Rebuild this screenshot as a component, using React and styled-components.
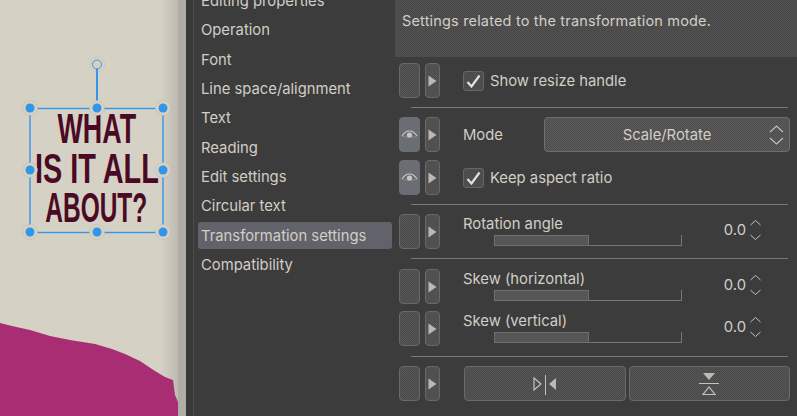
import React from 'react';
import styled, { createGlobalStyle } from 'styled-components';

const GlobalStyle = createGlobalStyle`
  html, body {
    margin: 0;
    padding: 0;
    height: 100%;
    overflow: hidden;
    background: #3c3c3c;
  }
  #root {
    height: 100%;
  }
`;

// the screenshot is a dithered gif, so filled parts have a 1px checker on them
const dither = 'repeating-conic-gradient(rgba(0,0,0,0.13) 0 25%, transparent 0 50%)';

const Page = styled.div`
  display: flex;
  width: 797px;
  height: 416px;
  overflow: hidden;
  font-family: Inter, "Liberation Sans", sans-serif;
  font-size: 14.8px;
  color: #d2cec6;
`;

const Canvas = styled.div`
  position: relative;
  flex: 0 0 178px;
  background: linear-gradient(to right, #d6d1c5 0, #d6d1c5 160px, #bebbb3 178px);
  overflow: hidden;
`;

const Edge = styled.div`
  flex: 0 0 8px;
  background: #b0ada7;
`;

const Gutter = styled.div`
  flex: 0 0 8px;
  background: #393939;
  border-right: 1px solid #4a4a4a;
  box-sizing: border-box;
`;

const Blob = styled.svg`
  position: absolute;
  left: 0;
  top: 0;
`;

const Caption = styled.div`
  position: absolute;
  left: 30px;
  top: 108px;
  width: 133px;
  height: 124px;
  display: flex;
  flex-direction: column;
  align-items: center;
  font-family: "Liberation Sans", sans-serif;
  font-weight: 700;
  font-size: 39.5px;
  line-height: 39.5px;
  color: #4a0a24;
  text-align: center;
  padding-top: 1px;
  box-sizing: border-box;
  white-space: nowrap;
`;

const CaptionLine = styled.span`
  display: block;
  transform: scale(${(p) => p.$squeeze}, 1.08);
`;

const Panel = styled.div`
  flex: 1;
  display: flex;
  min-width: 0;
  background: #3c3c3c;
`;

const Sidebar = styled.div`
  flex: 0 0 201px;
  box-sizing: border-box;
  padding: 0 3px 0 4px;
  margin-top: -13px;
  display: flex;
  flex-direction: column;
  gap: 2.33px;
`;

const SideItem = styled.div`
  height: 27px;
  line-height: 29px;
  padding-left: 3px;
  border-radius: 3px;
  white-space: nowrap;
  background: ${(p) => (p.$active ? '#62636a' : 'transparent')};
`;

const Content = styled.div`
  flex: 1;
  min-width: 0;
  display: flex;
  flex-direction: column;
`;

const Description = styled.div`
  height: 57px;
  box-sizing: border-box;
  padding: 12px 0 0 7px;
  background-color: #525252;
  background-image: ${dither};
  background-size: 2px 2px;
  line-height: 18px;
  letter-spacing: 0.012em;
  font-size: 14.5px;
`;

const Row = styled.div`
  display: flex;
  align-items: stretch;
  height: 35px;
  margin-top: ${(p) => p.$top}px;
  padding: 0 7px 0 4px;
`;

const Toggle = styled.div`
  flex: 0 0 21px;
  box-sizing: border-box;
  display: flex;
  align-items: center;
  justify-content: center;
  border-radius: 4px;
  border: 1px solid ${(p) => (p.$on ? '#6b6d75' : '#686868')};
  background-color: ${(p) => (p.$on ? '#6b6d75' : '#565656')};
  background-image: ${(p) => (p.$on ? 'none' : dither)};
  background-size: 2px 2px;
`;

const Arrow = styled(Toggle)`
  flex: 0 0 15px;
  margin-left: 5px;
`;

const Body = styled.div`
  flex: 1;
  margin-left: 23px;
  display: flex;
  align-items: center;
  min-width: 0;
`;

const Separator = styled.div`
  height: 1px;
  margin: ${(p) => p.$top}px 9px 0 16px;
  background: #77777a;
`;

const CheckBox = styled.div`
  flex: 0 0 21px;
  height: 20px;
  box-sizing: border-box;
  display: flex;
  align-items: center;
  justify-content: center;
  margin-right: 6px;
  border: 1px solid #666;
  border-radius: 3px;
  background: #4d4d4d;
`;

const Mode = styled.span`
  flex: 0 0 81px;
`;

const Select = styled.div`
  position: relative;
  flex: 1;
  align-self: stretch;
  box-sizing: border-box;
  display: flex;
  align-items: center;
  justify-content: center;
  border: 1px solid #6e6e6e;
  border-radius: 4px;
  background-color: #5a5a5a;
  background-image: ${dither};
  background-size: 2px 2px;
`;

const SelectArrows = styled.svg`
  position: absolute;
  right: 5px;
  top: 7px;
`;

const SliderBody = styled.div`
  flex: 1;
  align-self: stretch;
  display: flex;
  min-width: 0;
`;

const SliderColumn = styled.div`
  flex: 0 0 219px;
  display: flex;
  flex-direction: column;
`;

const SliderLabel = styled.div`
  height: 21px;
  line-height: 20px;
  white-space: nowrap;
`;

const Track = styled.div`
  margin-left: 31px;
  width: 188px;
  height: 11px;
  box-sizing: border-box;
  border-bottom: 1px solid #77777a;
  border-right: 1px solid #77777a;
`;

const TrackFill = styled.div`
  width: 95px;
  height: 11px;
  box-sizing: border-box;
  border: 1px solid #6e6e6e;
  background-color: #5c5c5c;
  background-image: ${dither};
  background-size: 2px 2px;
`;

const Value = styled.div`
  flex: 1;
  display: flex;
  align-items: center;
  justify-content: flex-end;
  padding-right: 28px;
  gap: 3px;
  margin-top: -4px;
`;

const ActionButton = styled.div`
  flex: 1;
  box-sizing: border-box;
  display: flex;
  align-items: center;
  justify-content: center;
  border: 1px solid #6a6a6a;
  border-radius: 4px;
  background-color: #555;
  background-image: ${dither};
  background-size: 2px 2px;
`;

const Actions = styled.div`
  flex: 1;
  display: flex;
  gap: 3px;
  margin-left: 24px;
`;

const Play = () => (
  <svg width="9" height="12" viewBox="0 0 9 12">
    <path d="M0.5 0.5L8.5 6L0.5 11.5Z" fill="#bdb9b0" />
  </svg>
);

const Eye = () => (
  <svg width="17" height="11" viewBox="0 0 17 11" fill="none">
    <path d="M1 7C3.5 3 6 2 8.5 2S13.5 3 16 7" stroke="#c9c6c0" strokeWidth="1.2" />
    <path d="M1 7C4 8.5 13 8.5 16 7" stroke="#c9c6c0" strokeWidth="0.6" opacity="0.5" />
    <circle cx="8.5" cy="6" r="2.6" fill="#c9c6c0" />
  </svg>
);

const Check = () => (
  <svg width="15" height="14" viewBox="0 0 15 14" fill="none">
    <path d="M1.5 8L5.5 12.5L13.5 1.5" stroke="#e4e1da" strokeWidth="2.2" />
  </svg>
);

const Spinner = () => (
  <svg width="13" height="24" viewBox="0 0 13 24" fill="none">
    <path d="M1.5 7L6.5 2.5L11.5 7M1.5 17L6.5 21.5L11.5 17" stroke="#c5c2ba" strokeWidth="1" />
  </svg>
);

const FlipH = () => (
  <svg width="24" height="24" viewBox="0 0 24 24" fill="none">
    <path d="M1 6L8 12L1 18Z" stroke="#c5c2ba" strokeWidth="1.2" />
    <path d="M12.5 3V23" stroke="#c5c2ba" strokeWidth="1" />
    <path d="M23 6L16 12L23 18Z" fill="#bdb9b0" />
  </svg>
);

const FlipV = () => (
  <svg width="24" height="24" viewBox="0 0 24 24" fill="none">
    <path d="M6 1H18L12 8Z" fill="#bdb9b0" />
    <path d="M2 11.5H22" stroke="#c5c2ba" strokeWidth="1" />
    <path d="M6 22.5H18L12 15Z" stroke="#c5c2ba" strokeWidth="1.2" />
  </svg>
);

const handles = [
  [30, 108], [97, 108], [163, 108],
  [30, 170], [163, 170],
  [30, 232], [97, 232], [163, 232],
];

const Artwork = () => (
  <Blob width="178" height="416" viewBox="0 0 178 416">
    <path
      d="M0 323L12 326L30 330L50 336L70 340L95 344L112 349L125 354L140 361L155 371L165 377L173 380L175 395L178 402V416H0Z"
      fill="#a92d72"
    />
  </Blob>
);

const Selection = () => (
  <Blob width="178" height="416" viewBox="0 0 178 416" fill="none">
    <rect x="30" y="108.5" width="133" height="124" stroke="#3296e8" strokeWidth="1.4" />
    <path d="M97 68V108" stroke="#3296e8" strokeWidth="2" />
    <circle cx="97" cy="64.5" r="7.5" stroke="#bdbab2" strokeWidth="1" strokeDasharray="1 1.5" />
    <circle cx="97" cy="64.5" r="4.5" stroke="#3296e8" strokeWidth="1" fill="#d6d1c5" />
    {handles.map(([x, y]) => (
      <g key={`${x}-${y}`}>
        <circle cx={x} cy={y} r="7.5" stroke="#b8b5ad" strokeWidth="1" strokeDasharray="1 1.5" fill="#d6d1c5" />
        <circle cx={x} cy={y} r="4.5" fill="#3296e8" />
      </g>
    ))}
  </Blob>
);

const RowButtons = ({ on }) => (
  <>
    <Toggle $on={on}>{on && <Eye />}</Toggle>
    <Arrow><Play /></Arrow>
  </>
);

const SliderRow = ({ top, label }) => (
  <Row $top={top}>
    <RowButtons />
    <Body>
      <SliderBody>
        <SliderColumn>
          <SliderLabel>{label}</SliderLabel>
          <Track><TrackFill /></Track>
        </SliderColumn>
        <Value>
          <span>0.0</span>
          <Spinner />
        </Value>
      </SliderBody>
    </Body>
  </Row>
);

const sections = [
  'Editing properties',
  'Operation',
  'Font',
  'Line space/alignment',
  'Text',
  'Reading',
  'Edit settings',
  'Circular text',
  'Transformation settings',
  'Compatibility',
];

const App = () => (
  <Page>
    <GlobalStyle />
    <Canvas>
      <Artwork />
      <Caption>
        <CaptionLine $squeeze={0.68}>WHAT</CaptionLine>
        <CaptionLine $squeeze={0.73}>IS IT ALL</CaptionLine>
        <CaptionLine $squeeze={0.62}>ABOUT?</CaptionLine>
      </Caption>
      <Selection />
    </Canvas>
    <Edge />
    <Gutter />
    <Panel>
      <Sidebar>
        {sections.map((name) => (
          <SideItem key={name} $active={name === 'Transformation settings'}>{name}</SideItem>
        ))}
      </Sidebar>
      <Content>
        <Description>Settings related to the transformation mode.</Description>
        <Row $top={6}>
          <RowButtons />
          <Body>
            <CheckBox><Check /></CheckBox>
            <span>Show resize handle</span>
          </Body>
        </Row>
        <Separator $top={9} />
        <Row $top={9}>
          <RowButtons on />
          <Body>
            <Mode>Mode</Mode>
            <Select>
              Scale/Rotate
              <SelectArrows width="15" height="20" viewBox="0 0 15 20" fill="none">
                <path d="M1 7L7.5 1L14 7M1 13L7.5 19L14 13" stroke="#c5c2ba" strokeWidth="1.1" />
              </SelectArrows>
            </Select>
          </Body>
        </Row>
        <Row $top={8}>
          <RowButtons on />
          <Body>
            <CheckBox><Check /></CheckBox>
            <span>Keep aspect ratio</span>
          </Body>
        </Row>
        <Separator $top={9} />
        <SliderRow top={9} label="Rotation angle" />
        <Separator $top={9} />
        <SliderRow top={10} label="Skew (horizontal)" />
        <SliderRow top={7} label="Skew (vertical)" />
        <Separator $top={10} />
        <Row $top={9}>
          <RowButtons />
          <Actions>
            <ActionButton><FlipH /></ActionButton>
            <ActionButton><FlipV /></ActionButton>
          </Actions>
        </Row>
      </Content>
    </Panel>
  </Page>
);

export default App;
